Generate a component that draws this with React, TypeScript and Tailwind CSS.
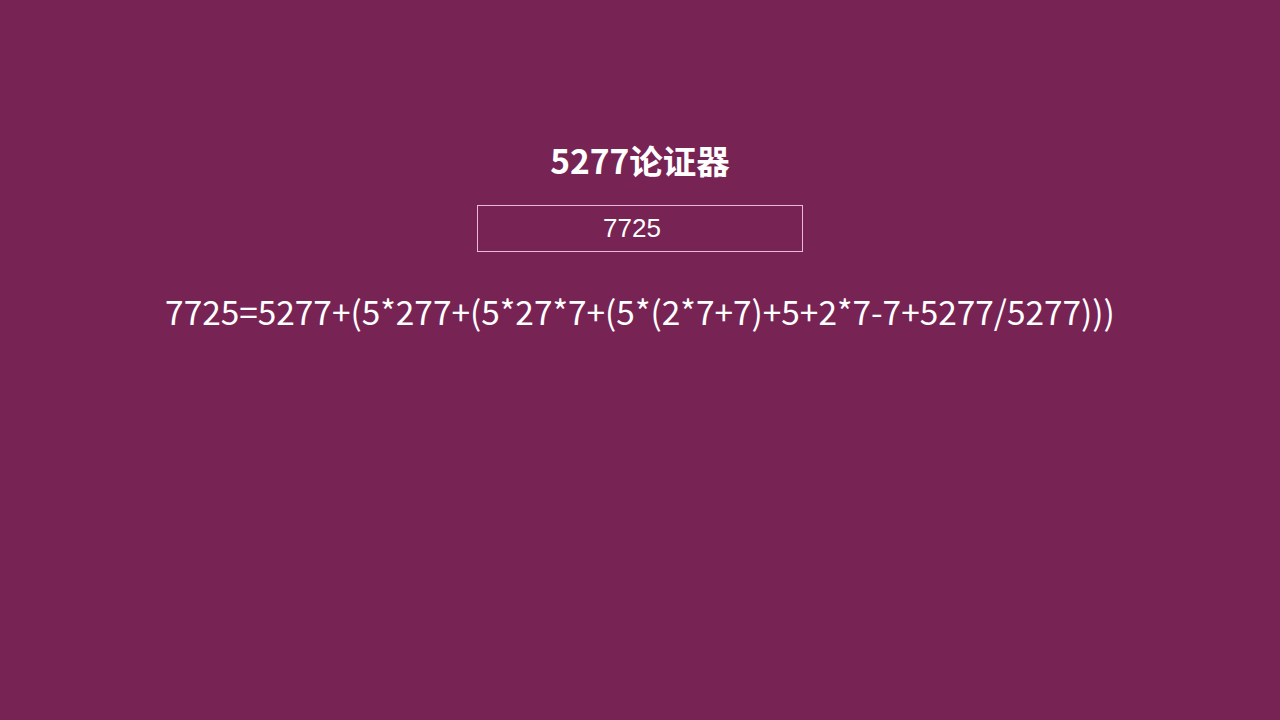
import { useState } from 'react'

export default function App() {
  const [valor, setValor] = useState('7725')
  const expr = '7725=5277+(5*277+(5*27*7+(5*(2*7+7)+5+2*7-7+5277/5277)))'

  return (
    <div
      className="min-h-[720px] w-full bg-[#772454] flex flex-col items-center text-white"
      style={{ fontFamily: '"Noto Sans CJK SC", "Noto Sans", sans-serif' }}
    >
      <h1 className="mt-[137px] text-[33.5px] leading-[46px] font-bold">5277论证器</h1>
      <input
        value={valor}
        onChange={e => setValor(e.target.value)}
        className="mt-[22px] w-[326px] h-[47px] border border-[#eab8da] bg-transparent pr-4 text-center text-[26px] text-white outline-none font-['Liberation_Sans',Arial,sans-serif]"
      />
      <p className="mt-[35px] text-[33.4px] leading-[48px]">{expr}</p>
    </div>
  )
}
